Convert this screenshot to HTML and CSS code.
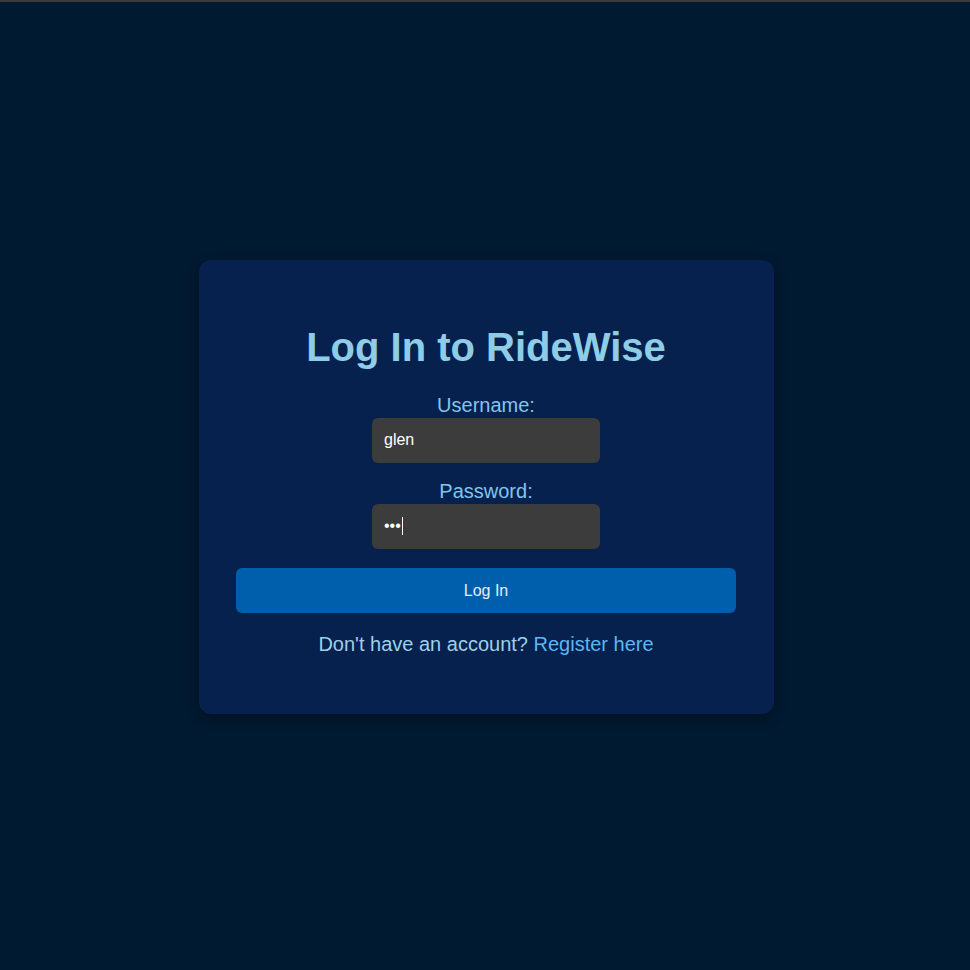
FILE: index.html
```html
<!DOCTYPE html>
<html lang="en">
<head>
<meta charset="utf-8">
<title>Log In to RideWise</title>
<link rel="stylesheet" href="styles.css">
</head>
<body>
<div class="topbar"></div>
<main class="page">
  <section class="card">
    <h1 class="title">Log In to RideWise</h1>
    <form class="form">
      <div class="field">
        <label class="label" for="username">Username:</label>
        <input class="input" id="username" type="text" value="glen">
      </div>
      <div class="field">
        <label class="label" for="password">Password:</label>
        <div class="input-wrap">
          <input class="input" id="password" type="password" value="abc">
          <span class="caret"></span>
        </div>
      </div>
      <button class="button" type="button">Log In</button>
    </form>
    <p class="footer">Don't have an account? <a class="link" href="#">Register here</a></p>
  </section>
</main>
</body>
</html>
```

FILE: styles.css
```css
html, body {
  margin: 0;
  padding: 0;
  height: 100%;
}
body {
  background: #001a31;
  font-family: "Liberation Sans", Arial, sans-serif;
  display: flex;
  flex-direction: column;
}
.topbar {
  height: 2px;
  background: #3b3b3b;
  flex: none;
}
.page {
  flex: 1;
  display: flex;
  align-items: center;
  justify-content: center;
  padding: 2px 0 0 3px;
}
.card {
  box-sizing: border-box;
  width: 575px;
  padding: 35px 38px 38px 37px;
  background: #07214f;
  border-radius: 12px;
  box-shadow: 0 4px 12px rgba(0, 0, 0, 0.35);
  text-align: center;
}
.title {
  margin: 29px 0 25px;
  font-size: 40px;
  font-weight: bold;
  color: #8fcde6;
  line-height: 46px;
}
.form {
  display: flex;
  flex-direction: column;
  align-items: center;
}
.field {
  display: flex;
  flex-direction: column;
  align-items: center;
  margin-bottom: 18px;
}
.label {
  display: block;
  font-size: 20px;
  color: #80c6ee;
  line-height: 21px;
  padding-bottom: 2px;
}
.input-wrap {
  position: relative;
}
.input {
  display: block;
  box-sizing: border-box;
  width: 228px;
  height: 45px;
  padding: 0 12px 2px;
  border: none;
  border-radius: 6px;
  background: #3c3c3c;
  color: #ffffff;
  font-family: "Liberation Sans", Arial, sans-serif;
  font-size: 16px;
  outline: none;
}
.caret {
  position: absolute;
  left: 30px;
  top: 13px;
  width: 1px;
  height: 18px;
  background: #ffffff;
}
.button {
  box-sizing: border-box;
  width: 500px;
  height: 45px;
  margin-top: 1px;
  border: none;
  border-radius: 6px;
  background: #005fad;
  color: #e6eef6;
  font-family: "Liberation Sans", Arial, sans-serif;
  font-size: 16px;
  cursor: pointer;
}
.footer {
  margin: 20px 0;
  font-size: 20px;
  line-height: 23px;
  color: #9fcfe8;
}
.link {
  color: #5cb6f2;
  text-decoration: none;
}
```
